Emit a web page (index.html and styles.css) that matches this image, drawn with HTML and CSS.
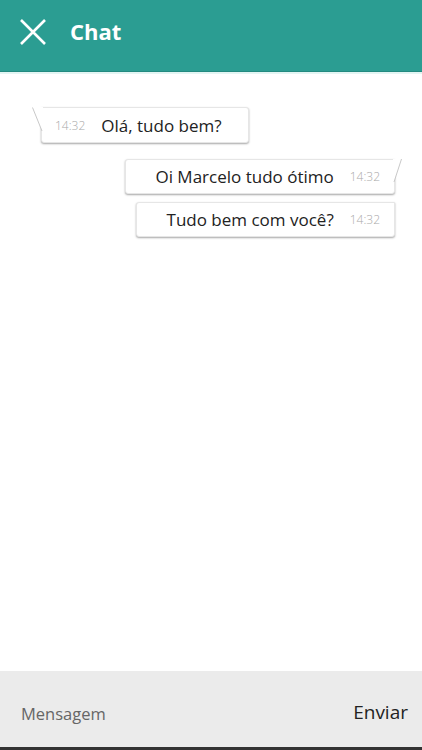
FILE: index.html
```html
<!DOCTYPE html>
<html lang="pt-BR">
<head>
    <meta charset="UTF-8">
    <meta name="viewport" content="width=device-width, initial-scale=1.0">
    <title>Chat</title>
    <link rel="stylesheet" href="styles.css">
</head>
<body>

<div class="topo">
    <svg class="fechar" width="26" height="26" viewBox="0 0 26 26">
        <path d="M1 1 L25 25 M25 1 L1 25" stroke="#fff" stroke-width="2.6" fill="none"/>
    </svg>
    <h1>Chat</h1>
</div>

<div class="conversa">
    <div class="balao recebido">
        <svg class="rabo" width="11" height="26" viewBox="0 0 11 26">
            <path d="M11 0 L0 0 L10 24 L11 24 Z" fill="#fff"/>
            <path d="M0.5 0.5 L10 24" stroke="#c8c8c8" stroke-width="1" fill="none"/>
        </svg>
        <span class="hora">14:32</span>
        <span class="texto">Olá, tudo bem?</span>
    </div>

    <div class="balao enviado">
        <svg class="rabo" width="9" height="24" viewBox="0 0 9 24">
            <path d="M0 0 L8 0 L1 23 L0 23 Z" fill="#fff"/>
            <path d="M8.5 0 L1 23" stroke="#c8c8c8" stroke-width="1" fill="none"/>
        </svg>
        <span class="texto">Oi Marcelo tudo ótimo</span>
        <span class="hora">14:32</span>
    </div>

    <div class="balao enviado">
        <span class="texto">Tudo bem com você?</span>
        <span class="hora">14:32</span>
    </div>
</div>

<div class="rodape">
    <span class="campo">Mensagem</span>
    <span class="enviar">Enviar</span>
</div>

</body>
</html>
```

FILE: styles.css
```css
body {
    font-family: 'Open Sans', sans-serif;
    margin: 0;
    height: 750px;
    display: flex;
    flex-direction: column;
    background-color: #fff;
    overflow: hidden;
}
.topo {
    height: 72px;
    background-color: #2b9d92;
    border-bottom: 1px solid #238a80;
    box-shadow: 0 2px 0 #e3f5f3;
    display: flex;
    align-items: center;
    padding-left: 20px;
    box-sizing: border-box;
}
.fechar {
    margin-top: -7px;
}
.topo h1 {
    margin: -9px 0 0 24px;
    font-size: 22px;
    font-weight: 700;
    color: #fff;
}
.conversa {
    flex: 1;
    display: flex;
    flex-direction: column;
    padding: 35px 27px 0 41px;
}
.balao {
    position: relative;
    display: flex;
    align-items: center;
    gap: 16px;
    height: 35px;
    background-color: #fff;
    border: 1px solid #e6e6e6;
    border-radius: 3px;
    box-shadow: 0 1px 2px rgba(0, 0, 0, 0.35);
    box-sizing: border-box;
}
.recebido {
    align-self: flex-start;
    padding: 0 26px 0 13px;
    margin-bottom: 16px;
    height: 36px;
    border-top-left-radius: 0;
}
.enviado {
    align-self: flex-end;
    padding: 0 14px 0 29px;
    margin-bottom: 8px;
    border-top-right-radius: 0;
}
.enviado + .enviado {
    padding-left: 30px;
}
.recebido .rabo {
    position: absolute;
    left: -10px;
    top: -1px;
}
.enviado .rabo {
    position: absolute;
    right: -8px;
    top: -1px;
}
.texto {
    font-size: 17px;
    color: #222;
}
.hora {
    font-size: 12px;
    color: #aaa;
    font-weight: 300;
}
.rodape {
    height: 76px;
    background-color: #ebebeb;
    border-bottom: 3px solid #333;
    display: flex;
    align-items: center;
    justify-content: space-between;
    padding: 0 14px 0 21px;
}
.campo {
    font-size: 16.5px;
    color: #666;
    margin-top: 8px;
}
.enviar {
    font-size: 19px;
    color: #222;
    margin-top: 6px;
}
```
